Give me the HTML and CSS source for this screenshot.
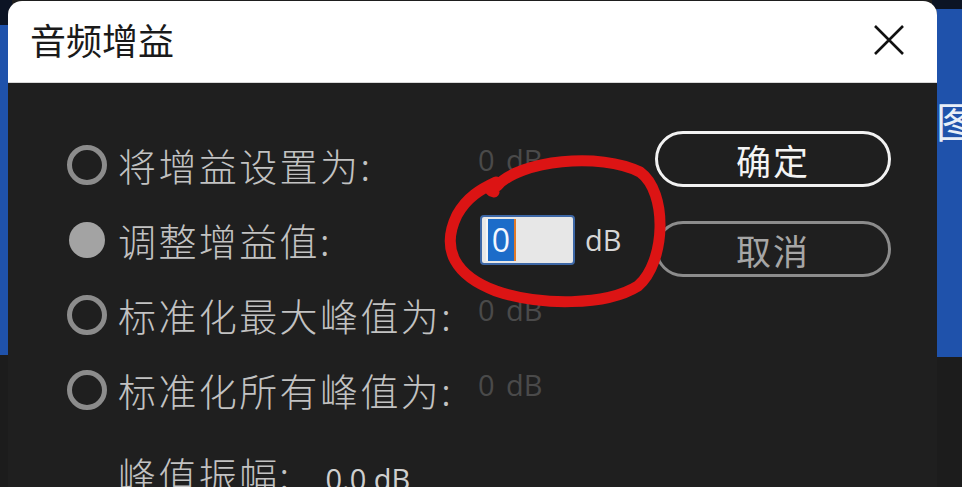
FILE: index.html
```html
<!DOCTYPE html>
<html lang="zh-CN">
<head>
<meta charset="utf-8">
<title>音频增益</title>
<link rel="stylesheet" href="styles.css">
</head>
<body>
<div class="desk">
  <div class="strip strip-left">
    <div class="navy navy-left"></div>
    <div class="blue blue-left"></div>
    <div class="dark dark-left"></div>
  </div>
  <div class="mid"></div>
  <div class="strip strip-right">
    <div class="navy navy-right"></div>
    <div class="blue blue-right"><span class="peek">图层</span></div>
    <div class="dark dark-right"></div>
  </div>
</div>

<div class="dialog">
  <div class="titlebar">
    <span class="title">音频增益</span>
    <span class="close" aria-label="关闭">
      <svg width="32" height="32" viewBox="0 0 32 32"><path d="M2 2 L30 30 M30 2 L2 30" stroke="#111" stroke-width="2.6" fill="none"/></svg>
    </span>
  </div>
  <div class="body">
    <div class="left">
      <div class="options">
        <span class="radio"></span>
        <span class="label">将增益设置为:</span>
        <span class="value faded">0 dB</span>

        <span class="radio checked"></span>
        <span class="label">调整增益值:</span>
        <span class="value">
          <span class="field"><span class="sel">0</span></span>
          <span class="unit">dB</span>
        </span>

        <span class="radio"></span>
        <span class="label">标准化最大峰值为:</span>
        <span class="value faded">0 dB</span>

        <span class="radio"></span>
        <span class="label">标准化所有峰值为:</span>
        <span class="value faded">0 dB</span>
      </div>
      <div class="peak"><span class="label">峰值振幅:</span><span class="peak-val">0.0 dB</span></div>
    </div>
    <div class="actions">
      <span class="btn primary">确定</span>
      <span class="btn">取消</span>
    </div>
  </div>
</div>

<svg class="annotation" width="962" height="487" viewBox="0 0 962 487">
  <path d="M497 186 C520 160, 600 152, 640 172 C668 192, 666 262, 638 286 C606 306, 540 306, 496 291 C456 276, 440 250, 457 215 C467 197, 481 189, 496 182 C491 185, 486 190, 494 192" stroke="#dc1414" stroke-width="11" fill="none" stroke-linecap="round" stroke-linejoin="round"/>
</svg>
</body>
</html>
```

FILE: styles.css
```css
html, body {
  margin: 0;
  padding: 0;
  width: 962px;
  height: 487px;
  overflow: hidden;
  background: #1b1b1b;
  font-family: "Noto Sans CJK SC", "Noto Sans", sans-serif;
}

.desk {
  position: absolute;
  inset: 0;
  display: flex;
}

.strip { display: flex; flex-direction: column; }
.strip-left { width: 12px; }
.strip-right { width: 30px; margin-left: auto; }
.mid { flex: 1; background: #1e1e1e; }

.navy { background: #0c1424; }
.navy-left { height: 25px; }
.navy-right { height: 9px; }

.blue { background: #1f52ab; }
.blue-left { height: 330px; }
.blue-right { height: 348px; position: relative; overflow: hidden; }

.dark { flex: 1; background: #1c1c1c; }
.dark-left { box-shadow: inset -3px 0 0 #3a3a3a; }
.dark-right { box-shadow: inset 3px 0 0 #3c3c3c; }

.peek {
  display: block;
  margin: 90px 0 0 4px;
  color: #e8eef8;
  font-size: 42px;
  line-height: 1;
  white-space: nowrap;
}

.dialog {
  position: absolute;
  left: 8px;
  top: 1px;
  width: 929px;
  height: 520px;
  border-radius: 14px 14px 0 0;
  overflow: hidden;
  background: #1f1f1f;
  display: flex;
  flex-direction: column;
}

.titlebar {
  height: 82px;
  box-sizing: border-box;
  background: #fff;
  display: flex;
  align-items: center;
  padding: 0 32px 0 22px;
  border-bottom: 1px solid #d8d8d8;
}

.title {
  font-size: 36px;
  color: #1a1a1a;
  line-height: 1;
  margin-top: -6px;
}

.close {
  margin-left: auto;
  display: flex;
  margin-top: -4px;
}

.body {
  display: flex;
  flex: 1;
}

.left {
  padding: 44px 0 0 59px;
}

.options {
  display: grid;
  grid-template-columns: 51px 362px auto;
  grid-auto-rows: 75px;
  align-items: center;
}

.radio {
  width: 40px;
  height: 40px;
  box-sizing: border-box;
  border: 5px solid #8c8c8c;
  border-radius: 50%;
}

.radio.checked {
  width: 36px;
  height: 36px;
  margin-left: 2px;
  border: none;
  background: #a3a3a3;
}

.label {
  font-size: 38px;
  font-weight: 300;
  letter-spacing: 2.4px;
  color: #c2c2c2;
  line-height: 1;
  white-space: nowrap;
}

.value {
  font-family: "Open Sans", "Noto Sans", sans-serif;
  font-size: 29px;
  display: flex;
  align-items: center;
  gap: 10px;
  margin-left: -2px;
}

.faded {
  color: #4a4a4a;
  word-spacing: 4px;
  margin-top: -10px;
}

.field {
  width: 95px;
  height: 50px;
  box-sizing: border-box;
  border: 2px solid #3d67a6;
  border-radius: 4px;
  background: #e7e7e7;
  display: flex;
  align-items: stretch;
  padding: 2px 0 2px 4px;
  margin-left: 2px;
}

.sel {
  width: 26px;
  background: #1c6cc9;
  color: #f2f6ff;
  font-size: 32px;
  line-height: 42px;
  text-align: center;
  border-left: 2px solid #f4f4f4;
  border-right: 2px solid #e07a2a;
}

.unit {
  color: #d6d6d6;
  font-size: 29px;
}

.peak {
  display: flex;
  align-items: baseline;
  margin: 28px 0 0 51px;
}

.peak-val {
  font-family: "Open Sans", "Noto Sans", sans-serif;
  font-size: 29px;
  color: #cfcfcf;
  margin-left: 34px;
}

.actions {
  margin-left: auto;
  padding: 48px 46px 0 0;
  display: flex;
  flex-direction: column;
  gap: 34px;
}

.btn {
  width: 236px;
  height: 56px;
  box-sizing: border-box;
  border: 3px solid #8c8c8c;
  border-radius: 28px;
  display: flex;
  align-items: center;
  justify-content: center;
  font-size: 35px;
  letter-spacing: 2px;
  color: #a6a6a6;
  line-height: 1;
}

.btn.primary {
  border-color: #f2f2f2;
  color: #f4f4f4;
}

.annotation {
  position: absolute;
  left: 0;
  top: 0;
  pointer-events: none;
}
```
